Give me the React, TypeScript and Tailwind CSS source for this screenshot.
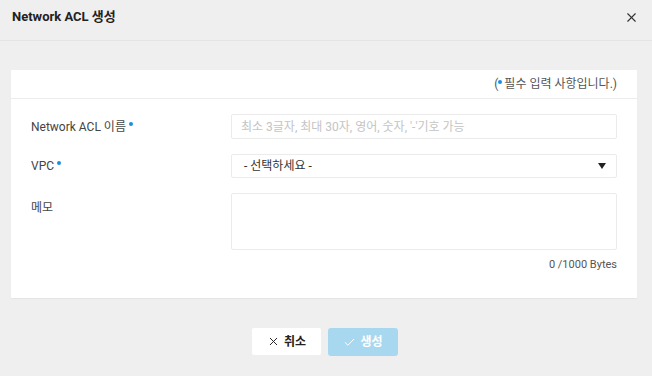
import React from 'react'
import { X, Check } from 'lucide-react'

const font = { fontFamily: 'Roboto, "Noto Sans CJK KR", sans-serif' }

function Req() {
  return <span className="inline-block w-[4px] h-[4px] rounded-full bg-[#1a8fe0] ml-[3px] -translate-y-[5px]" />
}

export default function App() {
  return (
    <div className="w-[652px] h-[376px] bg-[#efefef] flex flex-col" style={font}>
      {/* Header */}
      <div className="h-[41px] shrink-0 flex items-center justify-between pl-[12px] pr-[13px] border-b border-[#e4e4e4]">
        <h1 className="text-[13px] font-bold text-[#222] -mt-[6px]">Network ACL 생성</h1>
        <X className="w-[15px] h-[15px] text-[#333] -mt-[5px]" strokeWidth={1.8} />
      </div>

      {/* Card */}
      <div className="mt-[29px] ml-[11px] w-[626px] h-[228px] bg-white shadow-[0_1px_1px_rgba(0,0,0,0.04)]">
        <div className="h-[29px] border-b border-[#ececec] flex items-center justify-end pr-[20px] text-[12px] text-[#555]">
          (<span className="inline-block w-[4px] h-[4px] rounded-full bg-[#1a8fe0] mr-[2px] -translate-y-[2px]" />필수 입력 사항입니다.)
        </div>

        <div className="pt-[15px] px-[20px] flex flex-col gap-[15px]">
          <div className="flex items-center">
            <label className="w-[200px] text-[12px] text-[#444]">
              Network ACL 이름<Req />
            </label>
            <input
              className="flex-1 h-[25px] border border-[#ebebeb] rounded-[2px] px-[9px] text-[12px] text-[#444] placeholder:text-[#c4c4c4] outline-none"
              placeholder="최소 3글자, 최대 30자, 영어, 숫자, '-'기호 가능"
              style={font}
            />
          </div>

          <div className="flex items-center">
            <label className="w-[200px] text-[12px] text-[#444]">
              VPC<Req />
            </label>
            <div className="flex-1 h-[24px] border border-[#ebebeb] rounded-[2px] pl-[12px] pr-[10px] flex items-center justify-between text-[12px] text-[#333]">
              <span>- 선택하세요 -</span>
              <svg width="8" height="6" viewBox="0 0 8 6">
                <path d="M0 0 H8 L4 6 Z" fill="#222" />
              </svg>
            </div>
          </div>

          <div className="flex items-start">
            <label className="w-[200px] pt-[6px] text-[12px] text-[#444]">메모</label>
            <div className="flex-1 flex flex-col">
              <div className="h-[57px] border border-[#ebebeb] rounded-[2px]" />
              <div className="mt-[7px] text-right text-[11px] text-[#555]">0 /1000 Bytes</div>
            </div>
          </div>
        </div>
      </div>

      {/* Footer buttons */}
      <div className="mt-[30px] flex justify-center gap-[7px] pr-[2px]">
        <button className="w-[69px] h-[27px] bg-white rounded-[2px] flex items-center justify-center gap-[4px] text-[12px] font-bold text-[#222]">
          <X className="w-[13px] h-[13px]" strokeWidth={1.8} />
          취소
        </button>
        <button className="w-[70px] h-[28px] bg-[#a8d8ef] rounded-[3px] flex items-center justify-center gap-[4px] text-[12px] font-bold text-white">
          <Check className="w-[13px] h-[13px]" strokeWidth={1.8} />
          생성
        </button>
      </div>
    </div>
  )
}
